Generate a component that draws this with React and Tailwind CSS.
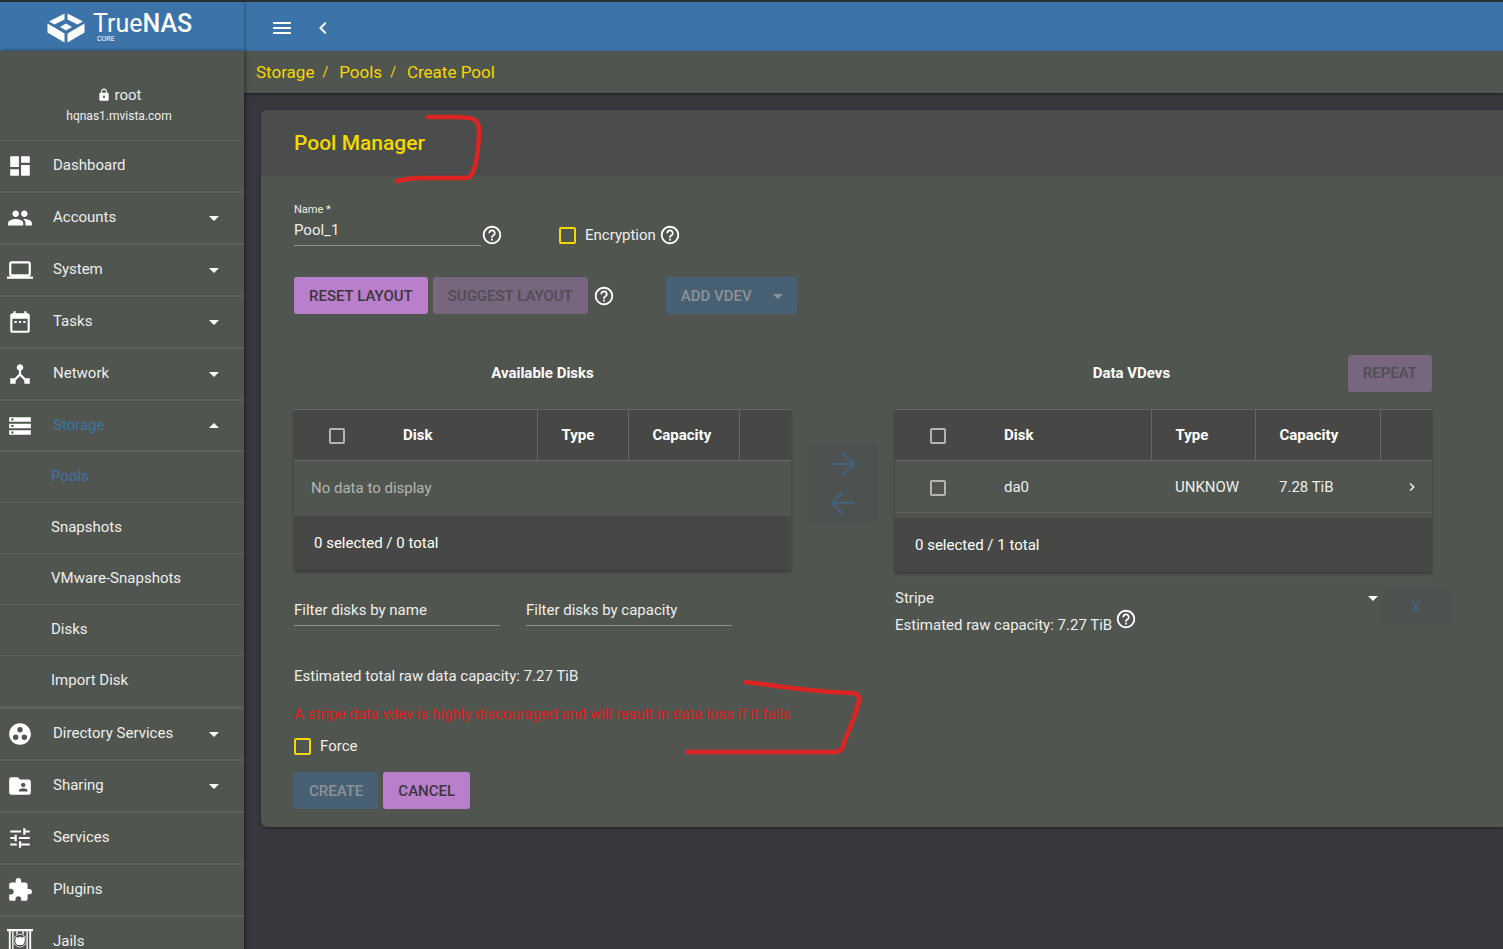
import React, { useState } from "react";
import {
  MdArrowDropDown,
  MdArrowDropUp,
  MdChevronLeft,
  MdChevronRight,
  MdDashboard,
  MdDateRange,
  MdDeviceHub,
  MdExtension,
  MdFolderShared,
  MdGroupWork,
  MdHelpOutline,
  MdLaptop,
  MdLock,
  MdMenu,
  MdPeople,
  MdStorage,
  MdTune,
} from "react-icons/md";

const NAV_ITEMS = [
  { label: "Dashboard", icon: MdDashboard },
  { label: "Accounts", icon: MdPeople, expandable: true },
  { label: "System", icon: MdLaptop, expandable: true },
  { label: "Tasks", icon: MdDateRange, expandable: true },
  { label: "Network", icon: MdDeviceHub, expandable: true },
  {
    label: "Storage",
    icon: MdStorage,
    expandable: true,
    active: true,
    children: ["Pools", "Snapshots", "VMware-Snapshots", "Disks", "Import Disk"],
  },
  { label: "Directory Services", icon: MdGroupWork, expandable: true },
  { label: "Sharing", icon: MdFolderShared, expandable: true },
  { label: "Services", icon: MdTune },
  { label: "Plugins", icon: MdExtension },
  { label: "Jails", icon: JailIcon },
];

const AVAILABLE_DISKS = [];
const VDEV_DISKS = [{ name: "da0", type: "UNKNOW", capacity: "7.28 TiB" }];

function JailIcon({ className }) {
  return (
    <svg viewBox="0 0 28 28" className={className} fill="currentColor">
      <path d="M0 0h28v2.4H0zM2 2.4h2V28H2zM5.600 2.400h1.400V28H5.600zM21 2.400h1.400V28H21zM24 2.400h2V28h-2z" />
      <path d="M10 2.400h1.500V6H10zM16.500 2.400H18V6h-1.500z" />
      <circle cx="14" cy="12.500" r="7.500" fill="#505550" />
      <circle cx="14" cy="12.500" r="6.900" fill="none" stroke="currentColor" strokeWidth="0.8" />
      <path d="M10 8.500l2.200 1L14 8.200l1.800 1.200 2.600-1.200c1.400 3 1.200 6.500-1.400 9h-6c-2.600-2.500-2.600-5.700-1-8.700z" />
    </svg>
  );
}

function Logo() {
  return (
    <div className="flex items-center gap-2 text-white">
      <svg viewBox="0 0 38 30" className="h-[30px] w-[38px]" fill="currentColor">
        <path d="M17.500 0.500v6L7.500 11.500 2 8.500z" />
        <path d="M20.500 0.500v6l10 5L36 8.500z" />
        <path d="M19 10.500l6 3.500-6 3.500-6-3.500z" />
        <path d="M0.500 10.500L17.500 20.500v9L0.500 19.500z" />
        <path d="M37.500 10.500L20.500 20.500v9L37.500 19.500z" />
      </svg>
      <div className="flex flex-col">
        <span className="text-[25px] leading-6">
          True<span className="font-medium">NAS</span>
        </span>
        <span className="pl-1 text-[7px] leading-[7px]">CORE</span>
      </div>
    </div>
  );
}

function NavItem({ item }) {
  const Icon = item.icon;
  const Arrow = item.children ? MdArrowDropUp : MdArrowDropDown;
  return (
    <li>
      <a
        href="#"
        className={`flex items-center border-b-2 border-[#5b605c] pl-[7px] pr-[18px] ${
          item.children ? "h-[51px]" : "h-[52px]"
        }`}
      >
        <Icon className="size-[26px] shrink-0 text-white" />
        <span className={`flex-1 pb-0.5 pl-5 ${item.active ? "text-[#3c74a8]" : ""}`}>{item.label}</span>
        {item.expandable && <Arrow className="size-6 text-white" />}
      </a>
      {item.children && (
        <ul className="border-b-2 border-[#5b605c]">
          {item.children.map((child, idx) => (
            <li key={child}>
              <a
                href="#"
                className={`flex h-[51px] items-center border-b border-[#5b605c] pb-0.5 pl-[51px] ${
                  idx === 0 ? "text-[#3c74a8]" : ""
                }`}
              >
                {child}
              </a>
            </li>
          ))}
        </ul>
      )}
    </li>
  );
}

function HelpButton() {
  return (
    <button type="button" aria-label="Help" className="shrink-0 text-white">
      <MdHelpOutline className="size-[22px]" />
    </button>
  );
}

function Button({ children, className }) {
  return (
    <button type="button" className={`h-[37px] rounded-[3px] px-[15px] font-medium uppercase ${className}`}>
      {children}
    </button>
  );
}

function Checkbox({ label }) {
  return (
    <label className="flex items-center gap-[9px]">
      <input type="checkbox" className="size-[17px] appearance-none rounded-[2px] border-2 border-[#f5d800]" />
      {label}
    </label>
  );
}

function TableCheckbox({ label }) {
  return (
    <input
      type="checkbox"
      aria-label={label}
      className="size-4 appearance-none rounded-[2px] border-2 border-[#b4b5b3] align-middle"
    />
  );
}

function DiskTable({ disks, cols }) {
  return (
    <div className="bg-[#474845] shadow-[0_2px_3px_rgba(0,0,0,0.3)]">
      <table className="w-full table-fixed text-left">
        <colgroup>
          <col className="w-[85px]" />
          <col />
          {cols.map((width) => (
            <col key={width} className={width} />
          ))}
        </colgroup>
        <thead>
          <tr className="h-[51px] border-y border-[#656865] text-white">
            <th className="text-center">
              <TableCheckbox label="Select all disks" />
            </th>
            <th className="border-r border-[#656865] pl-6">Disk</th>
            <th className="border-r border-[#656865] pl-6">Type</th>
            <th className="border-r border-[#656865] pl-6">Capacity</th>
            <th />
          </tr>
        </thead>
        <tbody className="bg-[#505550]">
          {disks.length === 0 && (
            <tr className="h-[55px]">
              <td colSpan={5} className="pl-[17px] text-[#b3b5b2]">
                No data to display
              </td>
            </tr>
          )}
          {disks.map((disk) => (
            <tr key={disk.name} className="h-[52px] border-b border-[#5b605c]">
              <td className="text-center">
                <TableCheckbox label={`Select ${disk.name}`} />
              </td>
              <td className="pl-6">{disk.name}</td>
              <td className="pl-6">{disk.type}</td>
              <td className="pl-6">{disk.capacity}</td>
              <td className="pl-6">
                <button type="button" aria-label="Expand" className="block text-white">
                  <MdChevronRight className="size-4" />
                </button>
              </td>
            </tr>
          ))}
        </tbody>
      </table>
      {disks.length > 0 && <div className="h-[5px] bg-[#505550]" />}
      <div className="flex h-[54px] items-center px-5 text-white">
        0 selected / {disks.length} total
      </div>
    </div>
  );
}

function ArrowButton({ label, path }) {
  return (
    <button type="button" aria-label={label} className="flex h-[39px] w-full items-center justify-center bg-[#4d514f]">
      <svg viewBox="0 0 24 24" className="size-6" fill="none" stroke="#456178" strokeWidth="2.5">
        <path d={path} />
      </svg>
    </button>
  );
}

// Hand drawn pen stroke laid over the card
function PenMark({ className, viewBox, path }) {
  return (
    <svg
      viewBox={viewBox}
      className={`pointer-events-none absolute ${className}`}
      fill="none"
      stroke="#dc2422"
      strokeWidth="4.5"
      strokeLinecap="round"
      strokeLinejoin="round"
    >
      <path d={path} />
    </svg>
  );
}

export default function App() {
  const [name, setName] = useState("Pool_1");
  const [layout, setLayout] = useState("stripe");

  return (
    <div className="flex h-screen flex-col overflow-hidden bg-[#36383d] font-[Roboto,sans-serif] text-[15px] leading-5 text-[#eeeeec]">
      {/* Top bar */}
      <header className="flex h-[51px] shrink-0 border-t-2 border-[#2c3035] bg-[#3c74aa]">
        <div className="flex w-[244px] items-center pl-[47px] pt-0.5 shadow-[1px_0_3px_rgba(0,0,0,0.3)]">
          <Logo />
        </div>
        <div className="flex items-center gap-[17px] pl-[26px] pt-0.5 text-white">
          <button type="button" aria-label="Menu">
            <MdMenu className="size-6" />
          </button>
          <button type="button" aria-label="Back">
            <MdChevronLeft className="size-6" />
          </button>
        </div>
      </header>

      <div className="flex min-h-0 flex-1">
        {/* Sidebar */}
        <aside className="z-10 w-[244px] shrink-0 overflow-hidden bg-[#505550] shadow-[1px_0_4px_rgba(0,0,0,0.5)]">
          <div className="flex h-[90px] flex-col items-center justify-end gap-px border-b border-[#5b605c] pb-[14px] pr-1.5">
            <div className="flex items-center gap-1">
              <MdLock className="size-[14px] text-white" />
              root
            </div>
            <div className="text-[12px]">hqnas1.mvista.com</div>
          </div>
          <nav>
            <ul>
              {NAV_ITEMS.map((item) => (
                <NavItem key={item.label} item={item} />
              ))}
            </ul>
          </nav>
        </aside>

        <main className="min-w-0 flex-1">
          {/* Breadcrumb */}
          <nav className="flex h-[42px] items-center gap-2 bg-[#505550] pl-3 text-[17px] text-[#f5d800] shadow-[0_1px_3px_rgba(0,0,0,0.5)]">
            <a href="#">Storage</a>
            <span className="pr-[3px] text-[14px]">/</span>
            <a href="#">Pools</a>
            <span className="pr-[3px] text-[14px]">/</span>
            <a href="#">Create Pool</a>
          </nav>

          <section className="relative ml-[17px] mt-[17px] rounded-l-md bg-[#505550] shadow-[0_1px_3px_rgba(0,0,0,0.4)]">
            <div className="flex h-[66px] items-center rounded-tl-md bg-[#4a4d4b] pl-[33px]">
              <h1 className="text-[21px] font-medium text-[#f5d800]">Pool Manager</h1>
            </div>

            <form className="pb-[18px] pl-[33px] pr-[54px] pt-6">
              {/* Name and encryption */}
              <div className="flex items-end">
                <div className="flex w-[187px] flex-col border-b border-[#8d908c]">
                  <label htmlFor="name" className="text-[11px]">
                    Name *
                  </label>
                  <input
                    id="name"
                    className="h-[25px] w-full bg-transparent pb-1.5 outline-none"
                    value={name}
                    onChange={(e) => setName(e.target.value)}
                  />
                </div>
                <HelpButton />
                <div className="flex items-center gap-[3px] pl-14">
                  <Checkbox label="Encryption" />
                  <HelpButton />
                </div>
              </div>

              {/* Layout buttons */}
              <div className="mt-[31px] flex items-center gap-[5px]">
                <Button className="bg-[#b97fcb] text-[#3d3640]">Reset Layout</Button>
                <Button className="bg-[#77667e] text-[#514c55]">Suggest Layout</Button>
                <HelpButton />
                <Button className="ml-[46px] flex items-center gap-[14px] bg-[#476074] pr-[7px] text-[#8d9294]">
                  Add Vdev
                  <MdArrowDropDown className="size-6" />
                </Button>
              </div>

              <div className="mt-10 grid grid-cols-[497fr_70px_554fr] gap-x-[17px]">
                {/* Available disks */}
                <div>
                  <div className="flex h-[38px] items-center justify-center">
                    <h2 className="font-bold text-white">Available Disks</h2>
                  </div>
                  <div className="mt-[17px]">
                    <DiskTable disks={AVAILABLE_DISKS} cols={["w-[91px]", "w-[111px]", "w-[52px]"]} />
                  </div>
                  <div className="mt-[30px] flex gap-[26px]">
                    <input
                      aria-label="Filter disks by name"
                      placeholder="Filter disks by name"
                      className="h-[26px] w-[206px] border-b border-[#8d908c] bg-transparent pb-1 outline-none placeholder:text-[#eeeeec]"
                    />
                    <input
                      aria-label="Filter disks by capacity"
                      placeholder="Filter disks by capacity"
                      className="h-[26px] w-[206px] border-b border-[#8d908c] bg-transparent pb-1 outline-none placeholder:text-[#eeeeec]"
                    />
                  </div>
                </div>

                {/* Move buttons */}
                <div className="pt-[90px]">
                  <ArrowButton label="Add to vdev" path="M0.5 12h22M12 1l11 11-11 11" />
                  <ArrowButton label="Remove from vdev" path="M23.5 12h-22M12 1L1 12l11 11" />
                </div>

                {/* Data vdevs */}
                <div>
                  <div className="pr-[17px]">
                    <div className="flex h-[38px] items-center pl-5">
                      <h2 className="flex-1 text-center font-bold text-white">Data VDevs</h2>
                      <Button className="bg-[#77667e] text-[#514c55]">Repeat</Button>
                    </div>
                    <div className="mt-[17px]">
                      <DiskTable disks={VDEV_DISKS} cols={["w-[104px]", "w-[125px]", "w-[52px]"]} />
                    </div>
                  </div>
                  <div className="mt-4 flex">
                    <div className="flex flex-1 flex-col">
                      <div className="relative flex items-center">
                        <select
                          aria-label="Vdev type"
                          className="h-5 w-full appearance-none bg-transparent outline-none"
                          value={layout}
                          onChange={(e) => setLayout(e.target.value)}
                        >
                          <option value="stripe">Stripe</option>
                        </select>
                        <MdArrowDropDown className="pointer-events-none absolute -right-0.5 size-6 text-white" />
                      </div>
                      <div className="flex items-start gap-[3px]">
                        <span className="pt-[7px]">Estimated raw capacity: 7.27 TiB</span>
                        <HelpButton />
                      </div>
                    </div>
                    <Button className="w-[66px] bg-[#4d514f] text-[#456178]">x</Button>
                  </div>
                </div>
              </div>

              <p className="mt-[31px]">Estimated total raw data capacity: 7.27 TiB</p>
              <p className="mb-3 mt-[18px] text-[#e11b1b]">
                A stripe data vdev is highly discouraged and will result in data loss if it fails
              </p>
              <Checkbox label="Force" />
              <div className="mt-4 flex gap-[5px]">
                <Button className="bg-[#476074] text-[#8d9294]">Create</Button>
                <Button className="bg-[#b97fcb] text-[#3d3640]">Cancel</Button>
              </div>
            </form>

            <PenMark
              className="left-[132px] top-1 h-[70px] w-[90px]"
              viewBox="0 0 90 70"
              path="M35 3H60C78 3 86 4 86 16C86 30 84 50 79 60Q77 64 71 64H30C20 64 12 65 4 67"
            />
            <PenMark
              className="left-[422px] top-[568px] h-[80px] w-[182px]"
              viewBox="0 0 182 80"
              path="M63 4C90 7 130 14 170 15Q177 16 176 23C172 40 166 50 160 68Q158 74 152 74H4"
            />
          </section>
        </main>
      </div>
    </div>
  );
}
